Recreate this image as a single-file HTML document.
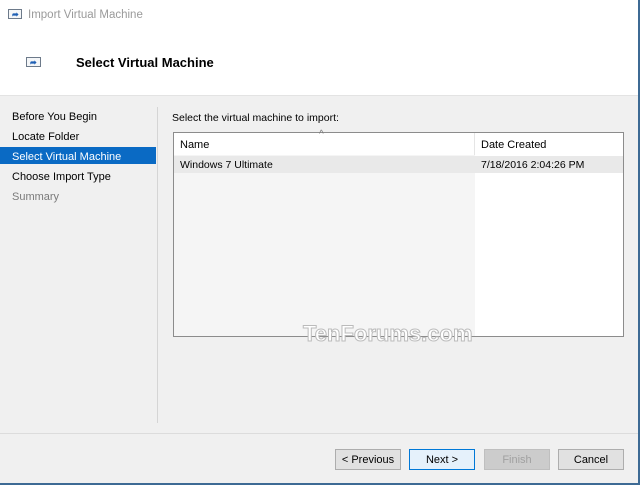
<!DOCTYPE html><html><head><style>
body{margin:0;width:640px;height:485px;position:relative;overflow:hidden;background:#f0f0f0;font-family:"Liberation Sans",sans-serif;font-size:11px;color:#000}
div{position:absolute;box-sizing:border-box}
.t{white-space:nowrap}
.btn{top:449px;height:21px;width:66px;border:1px solid #adadad;background:#e1e1e1;text-align:center;line-height:20px;font-size:11px}
</style></head><body>
<div style="left:0;top:0;width:640px;height:96px;background:#fff"></div>
<div style="left:0;top:95px;width:640px;height:1px;background:#e3e3e3"></div>
<div style="left:8px;top:9px;width:14px;height:10px;border:1px solid #6d7a8a;background:#f4f6f8"><span style="position:absolute;left:3px;top:0;color:#1e5fb4;font-size:8px;font-weight:bold">➦</span></div>
<div class="t" style="left:28px;top:9px;color:#9a9a9a;font-size:11.5px">Import Virtual Machine</div>
<div style="left:26px;top:57px;width:15px;height:10px;border:1px solid #6d7a8a;background:#f4f6f8"><span style="position:absolute;left:3px;top:0;color:#1e5fb4;font-size:8px;font-weight:bold">➦</span></div>
<div class="t" style="left:76px;top:55px;font-weight:bold;font-size:13px">Select Virtual Machine</div>
<div style="left:157px;top:107px;width:1px;height:316px;background:#d5d5d5"></div>
<div class="t" style="left:12px;top:111px">Before You Begin</div>
<div class="t" style="left:12px;top:131px">Locate Folder</div>
<div style="left:0;top:147px;width:156px;height:17px;background:#0a6ac4"></div>
<div class="t" style="left:12px;top:151px;color:#fff">Select Virtual Machine</div>
<div class="t" style="left:12px;top:171px">Choose Import Type</div>
<div class="t" style="left:12px;top:191px;color:#7a7a7a">Summary</div>
<div class="t" style="left:172px;top:112px;font-size:10.5px">Select the virtual machine to import:</div>
<div style="left:173px;top:132px;width:451px;height:205px;border:1px solid #8c8c8c;background:#f5f5f5"></div>
<div style="left:174px;top:133px;width:449px;height:22px;background:#fff"></div>
<div style="left:475px;top:133px;width:148px;height:203px;background:#fff"></div>
<div style="left:474px;top:133px;width:1px;height:22px;background:#e5e5e5"></div>
<div style="left:174px;top:156px;width:449px;height:17px;background:#e9e9e9"></div>
<div class="t" style="left:180px;top:139px">Name</div>
<div class="t" style="left:319px;top:129px;color:#777;font-size:10px">^</div>
<div class="t" style="left:481px;top:139px">Date Created</div>
<div class="t" style="left:180px;top:159px;font-size:10.5px">Windows 7 Ultimate</div>
<div class="t" style="left:481px;top:159px;font-size:10.5px">7/18/2016 2:04:26 PM</div>
<div class="t" style="left:303px;top:321px;font-size:22px;font-weight:bold;color:#fff;-webkit-text-stroke:1px #bbb">TenForums.com</div>
<div style="left:0;top:433px;width:640px;height:1px;background:#dcdcdc"></div>
<div class="btn" style="left:335px">&lt; Previous</div>
<div class="btn" style="left:409px;border:1px solid #0078d7;background:#e5f1fb">Next &gt;</div>
<div class="btn" style="left:484px;color:#a0a0a0;background:#cccccc;border-color:#bfbfbf">Finish</div>
<div class="btn" style="left:558px">Cancel</div>
<div style="left:638px;top:0;width:2px;height:485px;background:#3d6a94"></div>
<div style="left:0;top:483px;width:640px;height:2px;background:#3d6a94"></div>
</body></html>
